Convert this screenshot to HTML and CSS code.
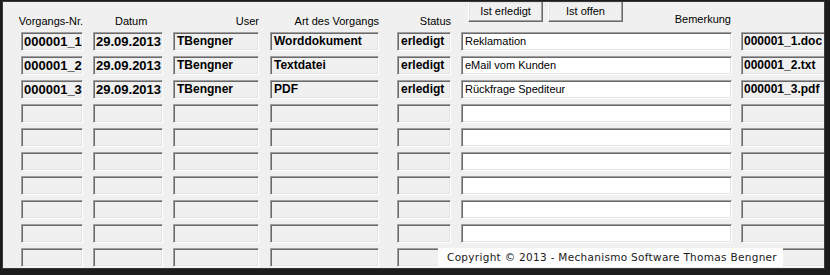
FILE: index.html
```html
<!DOCTYPE html>
<html lang="de">
<head>
<meta charset="utf-8">
<title>Vorgänge</title>
<link rel="stylesheet" href="styles.css">
</head>
<body>
<div class="window">
  <div class="line header">
    <div class="cell hc"><span class="label">Vorgangs-Nr.</span></div>
    <div class="cell hc datum"><span class="label">Datum</span></div>
    <div class="cell hc"><span class="label">User</span></div>
    <div class="cell hc"><span class="label">Art des Vorgangs</span></div>
    <div class="cell hc"><span class="label">Status</span></div>
    <div class="cell hdr6">
      <div class="buttons">
        <div class="btn">Ist erledigt</div>
        <div class="btn">Ist offen</div>
      </div>
      <span class="label bem">Bemerkung</span>
    </div>
    <div class="cell"></div>
  </div>

  <div class="rows">
    <div class="line row">
      <div class="cell f num">000001_1</div><div class="cell f num">29.09.2013</div><div class="cell f">TBengner</div><div class="cell f">Worddokument</div><div class="cell f">erledigt</div><div class="cell f w">Reklamation</div><div class="cell f file">000001_1.doc</div>
    </div>
    <div class="line row">
      <div class="cell f num">000001_2</div><div class="cell f num">29.09.2013</div><div class="cell f">TBengner</div><div class="cell f">Textdatei</div><div class="cell f">erledigt</div><div class="cell f w">eMail vom Kunden</div><div class="cell f file">000001_2.txt</div>
    </div>
    <div class="line row">
      <div class="cell f num">000001_3</div><div class="cell f num">29.09.2013</div><div class="cell f">TBengner</div><div class="cell f">PDF</div><div class="cell f">erledigt</div><div class="cell f w">Rückfrage Spediteur</div><div class="cell f file">000001_3.pdf</div>
    </div>
    <div class="line row"><div class="cell f"></div><div class="cell f"></div><div class="cell f"></div><div class="cell f"></div><div class="cell f"></div><div class="cell f w"></div><div class="cell f"></div></div>
    <div class="line row"><div class="cell f"></div><div class="cell f"></div><div class="cell f"></div><div class="cell f"></div><div class="cell f"></div><div class="cell f w"></div><div class="cell f"></div></div>
    <div class="line row"><div class="cell f"></div><div class="cell f"></div><div class="cell f"></div><div class="cell f"></div><div class="cell f"></div><div class="cell f w"></div><div class="cell f"></div></div>
    <div class="line row"><div class="cell f"></div><div class="cell f"></div><div class="cell f"></div><div class="cell f"></div><div class="cell f"></div><div class="cell f w"></div><div class="cell f"></div></div>
    <div class="line row"><div class="cell f"></div><div class="cell f"></div><div class="cell f"></div><div class="cell f"></div><div class="cell f"></div><div class="cell f w"></div><div class="cell f"></div></div>
    <div class="line row"><div class="cell f"></div><div class="cell f"></div><div class="cell f"></div><div class="cell f"></div><div class="cell f"></div><div class="cell f w"></div><div class="cell f"></div></div>
    <div class="line row"><div class="cell f"></div><div class="cell f"></div><div class="cell f"></div><div class="cell f"></div><div class="cell f"></div><div class="cell f w"></div><div class="cell f"></div></div>
  </div>

  <div class="copyright">Copyright © 2013 - Mechanismo Software Thomas Bengner</div>
</div>
</body>
</html>
```

FILE: styles.css
```css
html, body {
  margin: 0;
  padding: 0;
}
body {
  width: 830px;
  height: 275px;
  background: #1c1c1c;
  overflow: hidden;
  font-family: "Liberation Sans", Arial, sans-serif;
}
.window {
  position: relative;
  margin: 2px 6px 0 3px;
  width: 821px;
  height: 266px;
  background: #f0f0f0;
  overflow: hidden;
  box-shadow: 0 0 0 1px #3a3a3a;
}
.line {
  display: flex;
  padding-left: 18px;
}
.cell {
  flex: none;
  box-sizing: border-box;
}
.line > .cell:nth-child(1) { width: 62px; }
.line > .cell:nth-child(2) { width: 70px; margin-left: 10px; }
.line > .cell:nth-child(3) { width: 86px; margin-left: 10px; }
.line > .cell:nth-child(4) { width: 109px; margin-left: 11px; }
.line > .cell:nth-child(5) { width: 54px; margin-left: 18px; }
.line > .cell:nth-child(6) { width: 271px; margin-left: 10px; }
.line > .cell:nth-child(7) { width: 100px; margin-left: 9px; }

.header {
  height: 30px;
}
.hc {
  display: flex;
  justify-content: flex-end;
  align-items: flex-end;
  padding-bottom: 4px;
}
.hc.datum {
  justify-content: flex-start;
  padding-left: 22px;
}
.label {
  font-size: 11px;
  line-height: 13px;
  color: #000;
  white-space: nowrap;
}
.hdr6 {
  display: flex;
  align-items: flex-start;
}
.buttons {
  display: flex;
  gap: 5px;
  padding-left: 7px;
}
.btn {
  width: 75px;
  height: 21px;
  margin-top: -1px;
  box-sizing: border-box;
  background: #f0f0f0;
  border: 1px solid;
  border-color: #fff #696969 #696969 #fff;
  box-shadow: inset -1px -1px 0 #a0a0a0, inset 1px 1px 0 #e3e3e3;
  font-size: 11px;
  line-height: 18px;
  text-align: center;
  color: #000;
}
.bem {
  margin-left: auto;
  margin-right: 1px;
  align-self: flex-end;
  margin-bottom: 6px;
}

.rows {
  display: flex;
  flex-direction: column;
  gap: 5px;
}
.row {
  height: 19px;
}
.f {
  height: 19px;
  background: #f0f0f0;
  border: 1px solid;
  border-color: #a0a0a0 #fff #fff #a0a0a0;
  box-shadow: inset 1px 1px 0 #696969, inset -1px -1px 0 #e3e3e3;
  padding: 0 0 0 3px;
  font-size: 12px;
  font-weight: bold;
  line-height: 17px;
  color: #000;
  white-space: nowrap;
  overflow: hidden;
}
.f.num {
  font-size: 13px;
  padding-left: 2px;
}
.f.file {
  font-size: 12px;
  padding-left: 2px;
}
.f.w {
  background: #fff;
  font-weight: normal;
  font-size: 11px;
}

.copyright {
  position: absolute;
  left: 435px;
  top: 246px;
  width: 345px;
  height: 19px;
  box-sizing: border-box;
  background: #fdfdfd;
  font-family: "DejaVu Sans", Verdana, sans-serif;
  font-size: 10.5px;
  line-height: 19px;
  padding-left: 9px;
  color: #1a1a1a;
  white-space: nowrap;
  letter-spacing: 0.3px;
}
```
